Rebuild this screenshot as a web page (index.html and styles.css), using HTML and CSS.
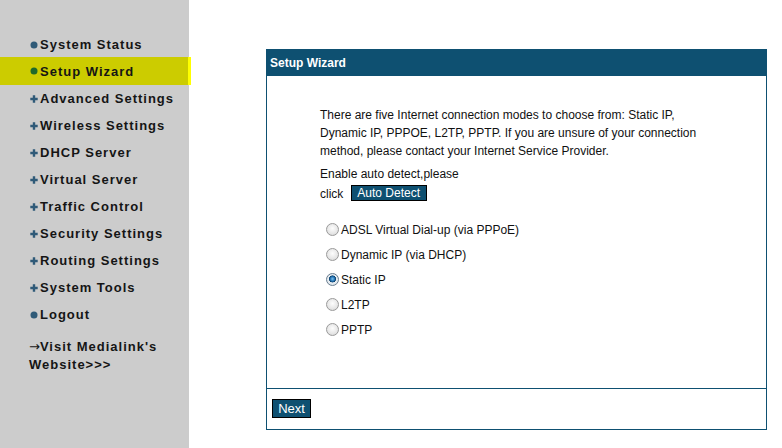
FILE: index.html
```html
<!DOCTYPE html>
<html>
<head>
<meta charset="utf-8">
<link rel="stylesheet" href="styles.css">
</head>
<body>
<div class="page">
  <nav class="sidebar">
    <ul class="menu">
      <li class="item"><svg class="bullet" viewBox="0 0 8 8"><circle cx="4" cy="4" r="3.5" fill="#2f5a78"/></svg>System Status</li>
      <li class="item active"><svg class="bullet" viewBox="0 0 8 8"><circle cx="4" cy="4" r="3.5" fill="#1f6a2a"/></svg>Setup Wizard</li>
      <li class="item"><svg class="bullet" viewBox="0 0 8 8"><path d="M2.8 0.3h2.4v2.5h2.5v2.4h-2.5v2.5h-2.4v-2.5h-2.5v-2.4h2.5z" fill="#2f5a78"/></svg>Advanced Settings</li>
      <li class="item"><svg class="bullet" viewBox="0 0 8 8"><path d="M2.8 0.3h2.4v2.5h2.5v2.4h-2.5v2.5h-2.4v-2.5h-2.5v-2.4h2.5z" fill="#2f5a78"/></svg>Wireless Settings</li>
      <li class="item"><svg class="bullet" viewBox="0 0 8 8"><path d="M2.8 0.3h2.4v2.5h2.5v2.4h-2.5v2.5h-2.4v-2.5h-2.5v-2.4h2.5z" fill="#2f5a78"/></svg>DHCP Server</li>
      <li class="item"><svg class="bullet" viewBox="0 0 8 8"><path d="M2.8 0.3h2.4v2.5h2.5v2.4h-2.5v2.5h-2.4v-2.5h-2.5v-2.4h2.5z" fill="#2f5a78"/></svg>Virtual Server</li>
      <li class="item"><svg class="bullet" viewBox="0 0 8 8"><path d="M2.8 0.3h2.4v2.5h2.5v2.4h-2.5v2.5h-2.4v-2.5h-2.5v-2.4h2.5z" fill="#2f5a78"/></svg>Traffic Control</li>
      <li class="item"><svg class="bullet" viewBox="0 0 8 8"><path d="M2.8 0.3h2.4v2.5h2.5v2.4h-2.5v2.5h-2.4v-2.5h-2.5v-2.4h2.5z" fill="#2f5a78"/></svg>Security Settings</li>
      <li class="item"><svg class="bullet" viewBox="0 0 8 8"><path d="M2.8 0.3h2.4v2.5h2.5v2.4h-2.5v2.5h-2.4v-2.5h-2.5v-2.4h2.5z" fill="#2f5a78"/></svg>Routing Settings</li>
      <li class="item"><svg class="bullet" viewBox="0 0 8 8"><path d="M2.8 0.3h2.4v2.5h2.5v2.4h-2.5v2.5h-2.4v-2.5h-2.5v-2.4h2.5z" fill="#2f5a78"/></svg>System Tools</li>
      <li class="item"><svg class="bullet" viewBox="0 0 8 8"><circle cx="4" cy="4" r="3.5" fill="#2f5a78"/></svg>Logout</li>
    </ul>
    <div class="visit"><span class="arrow">→</span>Visit Medialink's<br>Website&gt;&gt;&gt;</div>
  </nav>
  <main class="main">
    <section class="panel">
      <div class="panel-head">Setup Wizard</div>
      <div class="panel-body">
        <p class="intro">There are five Internet connection modes to choose from: Static IP, Dynamic IP, PPPOE, L2TP, PPTP. If you are unsure of your connection method, please contact your Internet Service Provider.</p>
        <p class="detect">Enable auto detect,please<br>click <button class="btn btn-detect">Auto Detect</button></p>
        <ul class="modes">
          <li><label><input type="radio" name="mode" class="radio"> ADSL Virtual Dial-up (via PPPoE)</label></li>
          <li><label><input type="radio" name="mode" class="radio"> Dynamic IP (via DHCP)</label></li>
          <li><label><input type="radio" name="mode" class="radio" checked> Static IP</label></li>
          <li><label><input type="radio" name="mode" class="radio"> L2TP</label></li>
          <li><label><input type="radio" name="mode" class="radio"> PPTP</label></li>
        </ul>
      </div>
      <div class="panel-foot">
        <button class="btn btn-next">Next</button>
      </div>
    </section>
  </main>
</div>
</body>
</html>
```
FILE: styles.css
```css
* { box-sizing: border-box; }
html, body { margin: 0; padding: 0; background: #fff; }
body { font-family: "Liberation Sans", Arial, sans-serif; }
.page { display: flex; height: 448px; overflow: hidden; }

.sidebar {
  width: 189px;
  flex: none;
  background: #cccccc;
  padding-top: 31px;
}
.menu { list-style: none; margin: 0; padding: 0; }
.item {
  height: 27px;
  display: flex;
  align-items: center;
  padding-left: 30px;
  font-size: 13px;
  font-weight: bold;
  letter-spacing: 1px;
  color: #151515;
  white-space: nowrap;
}
.item.active {
  background: #cccc00;
  width: 191px;
  border-right: 3px solid #ffff00;
  height: 28px;
  margin-top: -1px;
}
.bullet { width: 8px; height: 8px; margin-right: 2px; flex: none; }
.visit {
  margin-top: 10px;
  padding-left: 29px;
  font-size: 13px;
  font-weight: bold;
  letter-spacing: 1px;
  line-height: 18px;
  color: #151515;
}
.arrow { font-family: "DejaVu Sans", sans-serif; font-weight: normal; letter-spacing: 0; font-size: 13px; }

.main { flex: 1; padding: 49px 0 0 77px; }
.panel {
  width: 501px;
  height: 381px;
  border: 1px solid #0e5071;
  border-top: none;
  display: flex;
  flex-direction: column;
}
.panel-head {
  height: 27px;
  background: #0e5071;
  color: #fff;
  font-size: 12px;
  font-weight: bold;
  line-height: 28px;
  padding-left: 4px;
  margin: 0 -1px;
}
.panel-body {
  flex: 1;
  padding: 30px 0 0 53px;
  font-size: 12px;
  color: #111;
  border-bottom: 1px solid #0e5071;
}
.intro { margin: 0; width: 400px; line-height: 18px; }
.detect { margin: 4px 0 0; line-height: 20px; }
.btn {
  font-family: "Liberation Sans", Arial, sans-serif;
  font-size: 12px;
  color: #fff;
  background: #0e5071;
  border: 1px solid #000;
  border-radius: 0;
  padding: 0 5px;
  height: 16px;
  line-height: 14px;
  cursor: pointer;
}
.btn-detect { margin-left: 4px; width: 76px; vertical-align: 1px; }
.modes { list-style: none; margin: 13px 0 0; padding: 0 0 0 6px; }
.modes li { height: 25px; display: flex; align-items: center; }
.modes label { display: flex; align-items: center; }
.radio {
  appearance: none;
  -webkit-appearance: none;
  width: 13px;
  height: 13px;
  margin: 0 2px 0 0;
  border-radius: 50%;
  border: 1px solid #9a9a9a;
  background: radial-gradient(circle at 50% 40%, #fdfdfd 0%, #e6e6e6 60%, #cfcfcf 100%);
}
.radio:checked {
  border-color: #6a7e90;
  background: radial-gradient(circle at 50% 45%, #7fc3f0 0%, #1f6fb0 28%, #0a3f6a 40%, #e9eef2 46%, #d4dde4 100%);
}
.panel-foot { height: 40px; padding: 10px 0 0 5px; }
.btn-next { width: 39px; height: 19px; font-size: 13px; line-height: 17px; padding: 0 4px; }
```
